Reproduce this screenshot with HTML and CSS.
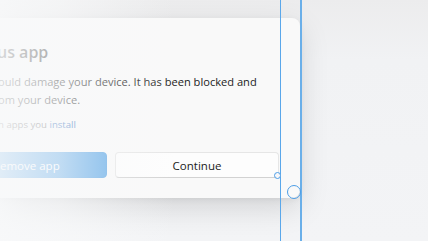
FILE: index.html
```html
<!DOCTYPE html>
<html>
<head>
<meta charset="utf-8">
<link rel="stylesheet" href="styles.css">
</head>
<body>
<div class="stage">
  <div class="dialog">
    <div class="content">
      <h1 class="title">us app</h1>
      <p class="body">ould damage your device. It has been blocked and<br>om your device.</p>
      <p class="note">h apps you <span class="link">install</span></p>
    </div>
    <div class="actions">
      <button class="btn primary">emove app</button>
      <button class="btn secondary">Continue</button>
    </div>
  </div>
  <div class="fade"></div>
  <div class="guide guide-a"></div>
  <div class="guide guide-b"></div>
  <div class="handle handle-sm"></div>
  <div class="handle handle-lg"></div>
</div>
</body>
</html>
```
FILE: styles.css
```css
html, body {
  margin: 0;
  padding: 0;
}
body {
  background: #f2f3f5;
  font-family: "Open Sans", "Noto Sans", sans-serif;
  width: 428px;
  height: 241px;
  overflow: hidden;
}
.stage {
  position: relative;
  width: 428px;
  height: 241px;
  padding-top: 18px;
  box-sizing: border-box;
  background: linear-gradient(180deg, #ececed 0px, #f1f2f4 60px, #f3f4f6 100%);
}
.dialog {
  width: 300px;
  height: 180px;
  background: #f9f9f9;
  border-radius: 0 8px 8px 0;
  box-shadow: 0 10px 30px rgba(0, 0, 0, 0.13), 0 2px 6px rgba(0, 0, 0, 0.06);
  overflow: hidden;
  display: flex;
  flex-direction: column;
  box-sizing: border-box;
  padding-top: 21px;
}
.content {
  margin-left: -1px;
}
.title {
  margin: 0 0 0 -2px;
  font-size: 16px;
  font-weight: 600;
  color: #1b1b1b;
  line-height: 26px;
  height: 26px;
}
.body {
  margin: 8px 0 0 -1px;
  font-size: 11.1px;
  line-height: 18px;
  color: #1b1b1b;
  white-space: nowrap;
}
.note {
  margin: 9px 0 0 -1px;
  font-size: 9.6px;
  line-height: 14px;
  color: #5d5d5d;
}
.link {
  color: #1a63b5;
}
.actions {
  display: flex;
  gap: 8px;
  margin-top: 20px;
  margin-left: -30px;
}
.btn {
  font-family: inherit;
  font-size: 11.5px;
  height: 26px;
  border-radius: 4px;
  padding: 0;
  box-sizing: border-box;
}
.primary {
  width: 137px;
  background: #5aa6e6;
  color: #ffffff;
  border: 1px solid #58a3e3;
  text-align: left;
  padding-left: 29px;
}
.secondary {
  width: 164px;
  background: #fdfdfd;
  color: #1b1b1b;
  border: 1px solid #e6e6e6;
  border-bottom-color: #d2d2d2;
}
.fade {
  position: absolute;
  inset: 0;
  background: linear-gradient(90deg, rgba(248, 249, 250, 0.85) 0px, rgba(248, 249, 250, 0.65) 60px, rgba(248, 249, 250, 0.3) 120px, rgba(248, 249, 250, 0) 175px);
  pointer-events: none;
}
.guide {
  position: absolute;
  top: 0;
  bottom: 0;
  background: #5aa7ea;
}
.guide-a {
  left: 280px;
  width: 1px;
}
.guide-b {
  left: 300px;
  width: 2px;
  background: #6aafe9;
}
.handle {
  position: absolute;
  border-radius: 50%;
  border: 1.5px solid #4d9ee6;
  background: #f8f8fa;
  box-sizing: border-box;
}
.handle-sm {
  left: 274px;
  top: 172px;
  width: 7px;
  height: 7px;
}
.handle-lg {
  left: 287px;
  top: 185px;
  width: 14px;
  height: 14px;
  background: transparent;
}
```
